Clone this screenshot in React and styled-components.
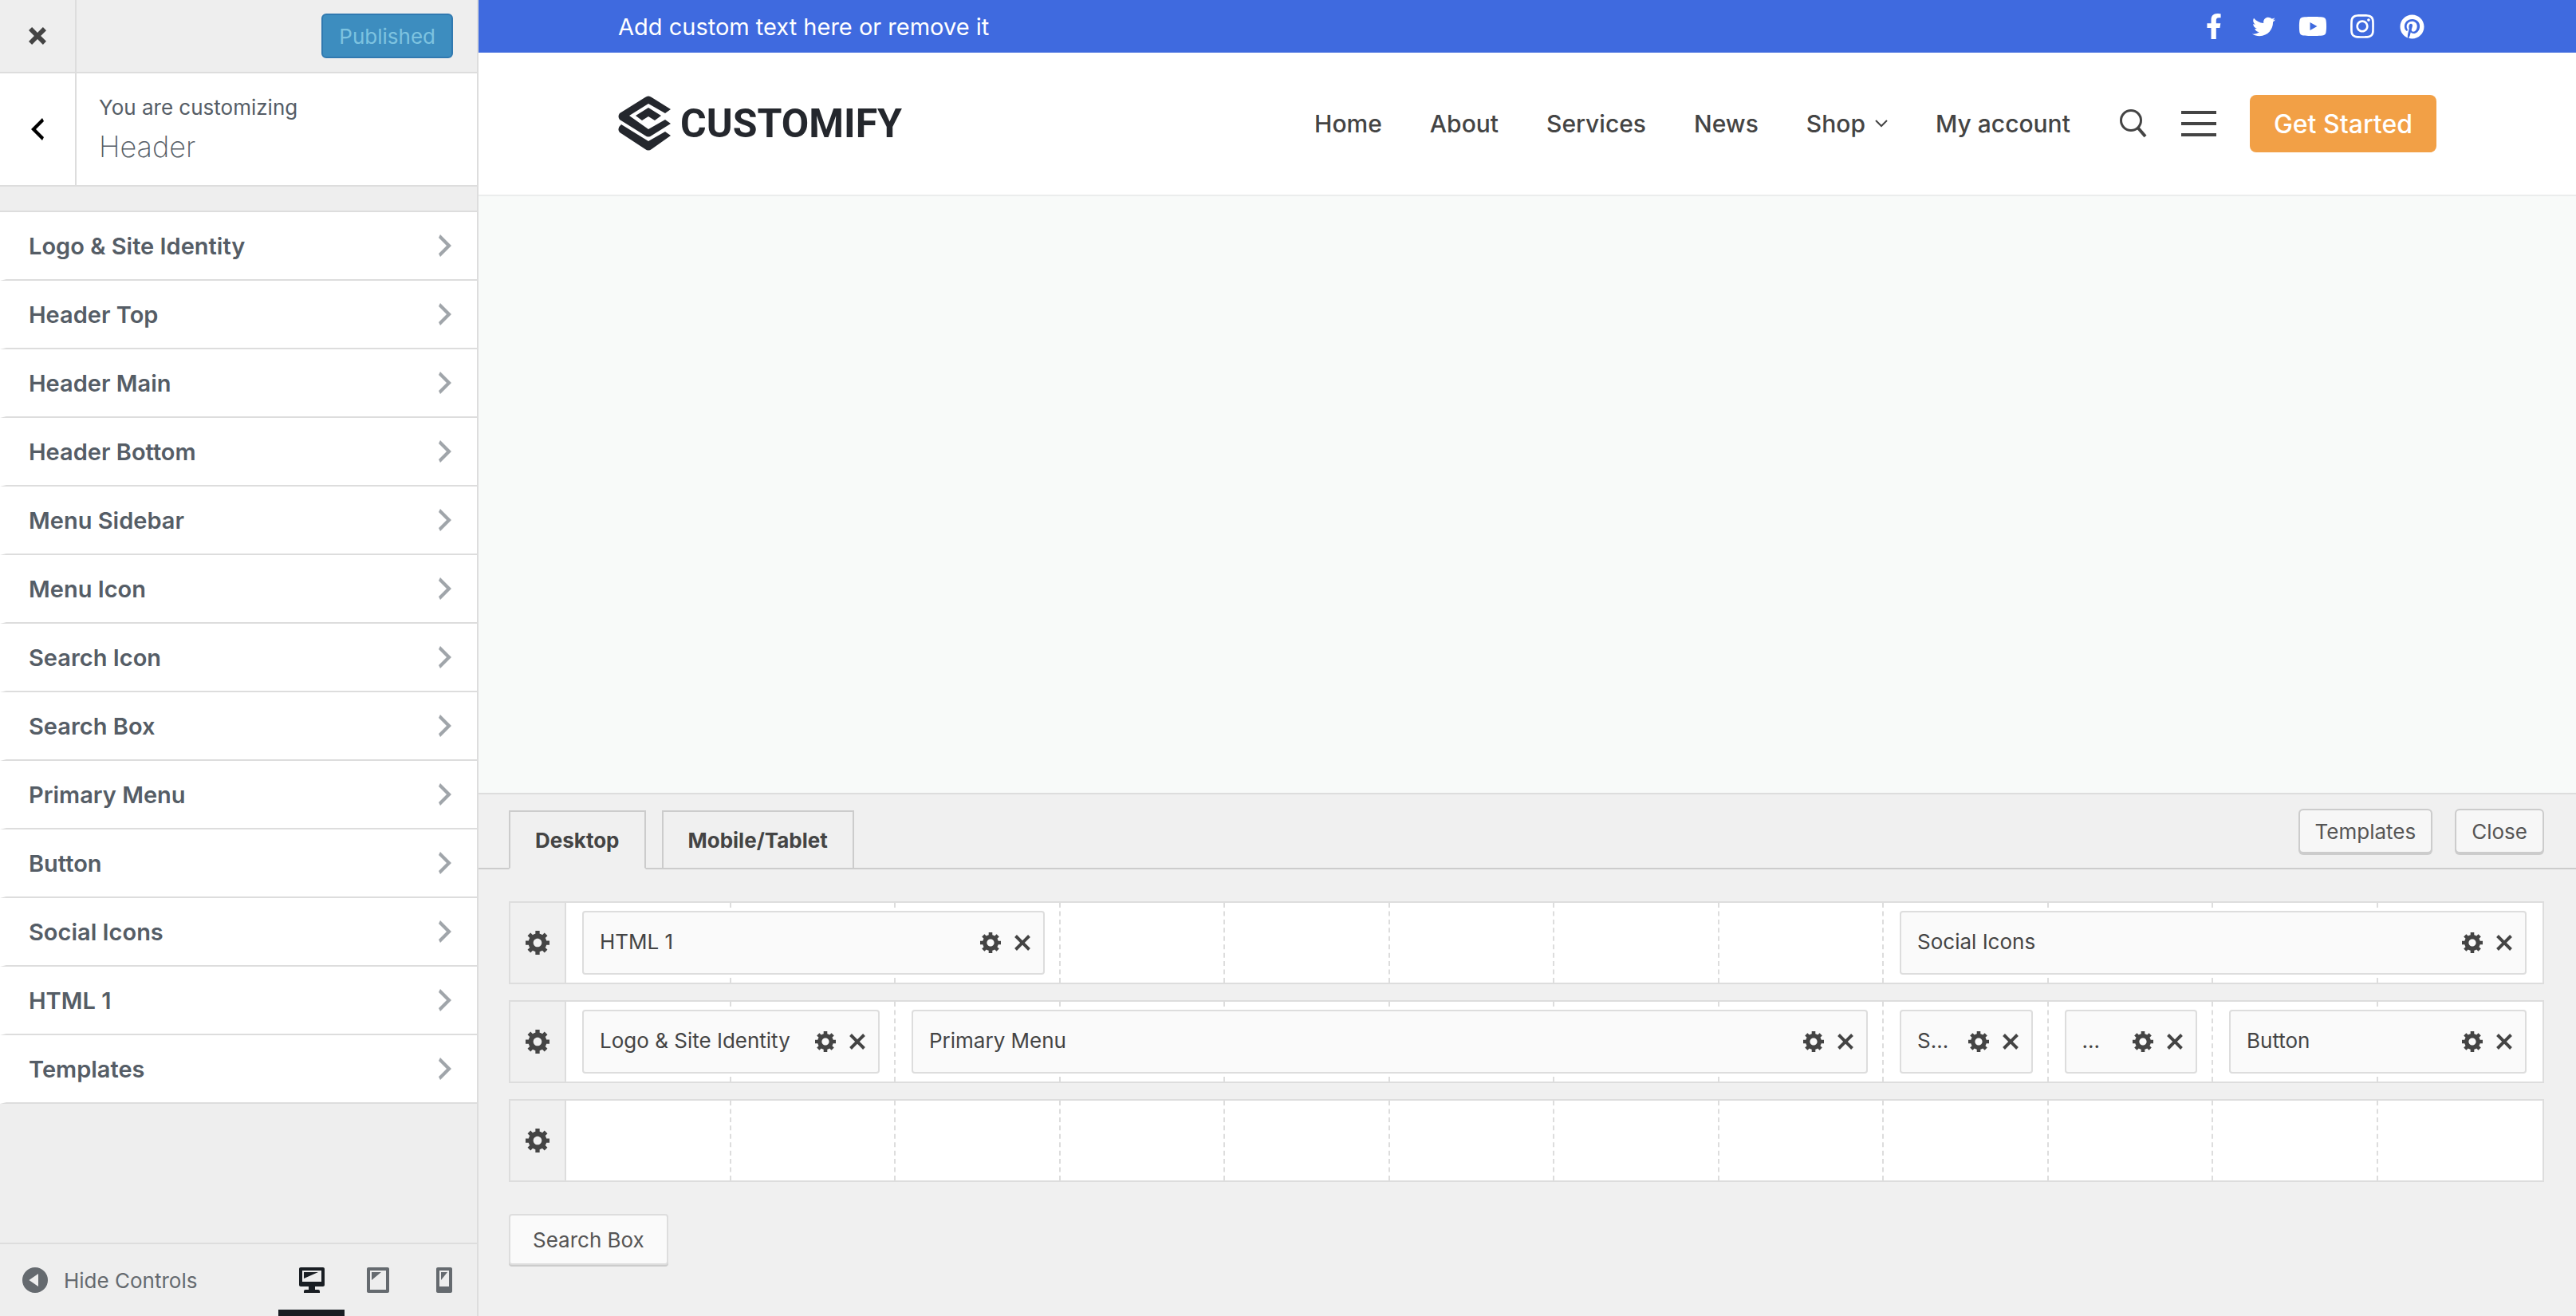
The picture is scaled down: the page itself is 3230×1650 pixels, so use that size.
import React from "react";
import styled, { createGlobalStyle, css } from "styled-components";
import { FaFacebookF, FaTwitter, FaYoutube, FaInstagram, FaPinterest } from "react-icons/fa";

const GlobalStyle = createGlobalStyle`
  *, *::before, *::after { box-sizing: border-box; }
  body { margin: 0; background: #eee; font-family: Inter, "Liberation Sans", sans-serif; }
  button { font-family: inherit; margin: 0; padding: 0; cursor: pointer; }
  h1, p, ul { margin: 0; padding: 0; }
  ul { list-style: none; }
  a { color: inherit; text-decoration: none; }
  svg { display: block; }
`;

const PATHS = {
  gear: ["1 2 17 17", "M18 12h-2.18c-.17.7-.44 1.35-.81 1.93l1.54 1.54-2.1 2.1-1.54-1.54c-.58.36-1.23.63-1.91.79V19H8v-2.18c-.68-.16-1.33-.43-1.91-.79l-1.54 1.54-2.12-2.12 1.54-1.54c-.36-.58-.63-1.23-.79-1.91H1V9.03h2.17c.16-.7.44-1.35.8-1.94L2.43 5.55l2.1-2.1 1.54 1.54c.58-.37 1.24-.64 1.93-.81V2h3v2.18c.68.16 1.33.43 1.91.79l1.54-1.54 2.12 2.12-1.54 1.54c.36.59.64 1.24.8 1.94H18V12zm-8.5 1.5c1.66 0 3-1.34 3-3s-1.34-3-3-3-3 1.34-3 3 1.34 3 3 3z"],
  remove: ["5 5 10 10", "M14.95 6.46L11.41 10l3.54 3.54-1.41 1.41L10 11.42l-3.53 3.53-1.42-1.42L8.58 10 5.05 6.47l1.42-1.42L10 8.58l3.54-3.53z"],
  close: ["4.34 4.34 11.32 11.32", "M12.12 10l3.53 3.53-2.12 2.12L10 12.12l-3.54 3.54-2.12-2.12L7.88 10 4.34 6.46l2.12-2.12L10 7.88l3.54-3.53 2.12 2.12z"],
  back: ["6 3 8 14", "M14 5l-5 5 5 5-1 2-7-7 7-7z"],
  next: ["6 3 8 14", "M6 15l5-5-5-5 1-2 7 7-7 7z"],
  collapse: ["2 2 16 16", "M10 2a8 8 0 1 0 0 16 8 8 0 0 0 0-16zM12 6v8l-5.8-4z"],
  desktop: ["2 2 16 16", "M3 2h14c.55 0 1 .45 1 1v10c0 .55-.45 1-1 1h-5v2h2c.55 0 1 .45 1 1v1H5v-1c0-.55.45-1 1-1h2v-2H3c-.55 0-1-.45-1-1V3c0-.55.45-1 1-1zm13 9V4H4v7h12zM5 5h9L5 9V5z"],
  tablet: ["2 2 16 16", "M4 2h12c.55 0 1 .45 1 1v14c0 .55-.45 1-1 1H4c-.55 0-1-.45-1-1V3c0-.55.45-1 1-1zm11 14V4H5v12h10zM6 5h6l-6 5V5z"],
  phone: ["2 2 16 16", "M6 2h8c.55 0 1 .45 1 1v14c0 .55-.45 1-1 1H6c-.55 0-1-.45-1-1V3c0-.55.45-1 1-1zm7 12V4H7v10h6zM8 5h4l-4 5V5z"],
};

function Icon({ name, width, height = width }) {
  const [box, d] = PATHS[name];
  return (
    <svg viewBox={box} width={width} height={height} fill="currentColor" fillRule="evenodd" aria-hidden="true">
      <path d={d} />
    </svg>
  );
}

const Page = styled.div`
  display: flex;
  min-height: 100vh;
`;

const Sidebar = styled.aside`
  display: flex;
  flex-direction: column;
  flex: 0 0 600px;
  background: #eee;
  border-right: 2px solid #ddd;
`;

const PublishBar = styled.div`
  display: flex;
  align-items: center;
  justify-content: space-between;
  height: 92px;
  padding-right: 30px;
  border-bottom: 2px solid #ddd;
`;

const SideButton = styled.button`
  display: flex;
  align-items: center;
  justify-content: center;
  align-self: stretch;
  width: 96px;
  border: 0;
  border-right: 2px solid #ddd;
  background: ${(p) => p.$bg};
  color: ${(p) => p.$color};
`;

const Published = styled.button`
  height: 56px;
  padding: 0 20px;
  border: 2px solid #3079b0;
  border-radius: 6px;
  background: #3d8dbf;
  color: #7dc3e0;
  font-size: 26px;
`;

const SectionHead = styled.header`
  display: flex;
  height: 142px;
  border-bottom: 2px solid #ddd;
  background: #fff;
`;

const SectionTitle = styled.div`
  padding: 24px 28px;
  color: #555d66;
`;

const Kicker = styled.p`
  font-size: 26px;
  line-height: 38px;
`;

const Title = styled.h1`
  font-size: 36px;
  font-weight: 200;
  line-height: 60px;
`;

const SectionList = styled.ul`
  margin-top: 30px;
  border-top: 2px solid #ddd;
`;

const SectionButton = styled.button`
  display: flex;
  align-items: center;
  justify-content: space-between;
  width: 100%;
  height: 86px;
  padding: 0 32px 0 28px;
  border: solid #ddd;
  border-width: 0 0 2px 8px;
  border-left-color: #fff;
  background: #fff;
  color: #555d66;
  font-size: 29px;
  font-weight: 600;

  svg { color: #a0a5aa; }
`;

const SideFooter = styled.footer`
  display: flex;
  justify-content: space-between;
  height: 92px;
  margin-top: auto;
  border-top: 2px solid #ddd;
  padding-left: 28px;
`;

const HideControls = styled.button`
  display: flex;
  align-items: center;
  gap: 20px;
  border: 0;
  background: none;
  color: #656a6f;
  font-size: 26px;
`;

const Devices = styled.div`
  display: flex;
`;

const DeviceButton = styled.button`
  display: flex;
  align-items: center;
  justify-content: center;
  width: 83px;
  border: 0;
  border-top: 8px solid transparent;
  border-bottom: 8px solid ${(p) => (p.$active ? "#191e23" : "transparent")};
  background: none;
  color: ${(p) => (p.$active ? "#191e23" : "#656a6f")};
`;

const Main = styled.main`
  display: flex;
  flex-direction: column;
  flex: 1;
  min-width: 0;
  background: #f8faf9;
`;

const Wrap = styled.div`
  display: flex;
  align-items: center;
  justify-content: space-between;
  width: 100%;
  max-width: 2400px;
  height: 100%;
  margin: 0 auto;
  padding: 0 60px;
`;

const TopBar = styled.div`
  height: 66px;
  background: #3f6adf;
  color: #fff;
  font-size: 29px;
`;

const Social = styled.div`
  display: flex;

  a {
    display: flex;
    align-items: center;
    justify-content: center;
    width: 62px;
  }
`;

const SiteHeader = styled.header`
  height: 180px;
  border-bottom: 2px solid #ebeded;
  background: #fff;
  color: #444;
`;

const Brand = styled.a`
  && { color: #24272d; }
  display: flex;
  align-items: center;
  gap: 10px;
  font-family: Roboto, "Liberation Sans", sans-serif;
  font-size: 50px;
  font-weight: 700;
`;

const HeaderRight = styled.div`
  display: flex;
  align-items: center;
`;

const Nav = styled.nav`
  display: flex;
  gap: 60px;
  font-size: 30px;
  font-weight: 500;

  a {
    display: flex;
    align-items: center;
    gap: 12px;
  }
`;

const PlainButton = styled.button`
  border: 0;
  background: none;
  color: inherit;
  margin-left: ${(p) => p.$gap}px;
`;

const Burger = styled.span`
  display: block;
  width: 44px;
  height: 32px;
  border: solid currentColor;
  border-width: 4px 0;
  padding: 10px 0;

  &::before {
    content: "";
    display: block;
    height: 4px;
    background: currentColor;
  }
`;

const CallToAction = styled.a`
  display: flex;
  align-items: center;
  height: 72px;
  margin-left: 42px;
  padding: 0 30px;
  border-radius: 8px;
  background: #f2a046;
  font-size: 32px;
  font-weight: 500;
  && { color: #fff; }
`;

const Builder = styled.section`
  margin-top: auto;
  padding-bottom: 64px;
  border-top: 2px solid #ddd;
  background: #f0f0f0;
`;

const TabStrip = styled.div`
  display: flex;
  align-items: flex-end;
  justify-content: space-between;
  height: 94px;
  padding: 0 40px 0 38px;
  border-bottom: 2px solid #ccc;
`;

const Tabs = styled.div`
  display: flex;
  gap: 20px;
  margin-bottom: -2px;
`;

const Tab = styled.button`
  height: 74px;
  padding: 0 31px;
  border: 2px solid #ccc;
  background: #f0f0f0;
  color: #444;
  font-size: 26px;
  font-weight: 700;
  ${(p) => p.$active && css`border-bottom-color: #f0f0f0;`}
`;

const Actions = styled.div`
  display: flex;
  align-self: flex-start;
  gap: 28px;
  padding-top: 18px;
`;

const buttonFace = css`
  border: 2px solid ${(p) => p.$line};
  box-shadow: 0 2px 0 #ccc;
  color: #555;
  font-size: 26px;
`;

const ActionButton = styled.button`
  ${buttonFace}
  height: 56px;
  padding: 0 19px;
  border-radius: 6px;
  background: #f7f7f7;
`;

const Rows = styled.div`
  display: flex;
  flex-direction: column;
  gap: 20px;
  padding: 40px 40px 40px 38px;
`;

const Row = styled.div`
  display: flex;
  height: 104px;
  border: 2px solid #ddd;
  background: #fff;
`;

const RowSettings = styled.button`
  display: flex;
  align-items: center;
  justify-content: center;
  width: 70px;
  border: 0;
  border-right: 2px solid #ddd;
  background: #f0f0f0;
  color: #444;
`;

const Grid = styled.div`
  display: grid;
  flex: 1;
  grid-template-columns: repeat(12, minmax(0, 1fr));
  grid-template-rows: 100px;
`;

const Cell = styled.div`
  grid-row: 1;
  grid-column: ${(p) => p.$at};
  border-right: 2px dashed #ddd;

  &:nth-child(12) { border-right: 0; }
`;

const Block = styled.div`
  display: flex;
  align-items: center;
  grid-row: 1;
  grid-column: ${(p) => p.$from} / span ${(p) => p.$span};
  margin: 10px 20px;
  padding: 0 16px 0 20px;
  border: 2px solid #ddd;
  border-radius: 4px;
  background: #fafafa;
  color: #444;
  font-size: 26px;
`;

const BlockName = styled.span`
  flex: 1;
  white-space: nowrap;
  padding-bottom: 4px;
`;

const BlockTool = styled.button`
  border: 0;
  background: none;
  color: inherit;
  margin-left: 17px;
`;

const Spare = styled.div`
  padding: 0 38px;
`;

const SpareBlock = styled.button`
  ${buttonFace}
  display: block;
  height: 64px;
  padding: 0 28px;
  border-radius: 4px;
  background: #fafafa;
`;

const sections = ["Logo & Site Identity", "Header Top", "Header Main", "Header Bottom", "Menu Sidebar", "Menu Icon", "Search Icon", "Search Box", "Primary Menu", "Button", "Social Icons", "HTML 1", "Templates"];

const socials = [
  ["Facebook", FaFacebookF, 32],
  ["Twitter", FaTwitter, 29],
  ["YouTube", FaYoutube, 36],
  ["Instagram", FaInstagram, 34],
  ["Pinterest", FaPinterest, 31],
];

const rows = [
  { name: "Header Top", blocks: [["HTML 1", 1, 3], ["Social Icons", 9, 4]] },
  { name: "Header Main", blocks: [["Logo & Site Identity", 1, 2], ["Primary Menu", 3, 6], ["S...", 9, 1, "Search Icon"], ["...", 10, 1, "Menu Icon"], ["Button", 11, 2]] },
  { name: "Header Bottom", blocks: [] },
];

const columns = Array.from({ length: 12 }, (_, i) => i + 1);

function Logo() {
  return (
    <svg width="68" height="70" viewBox="0 0 68 70" fill="currentColor" aria-hidden="true">
      <path d="M2 22 34 2Q38 -1 42 2L66 17 59 22 38 10 14 25 38 42 59 30 66 35 42 50Q38 53 34 50L2 30Q-1 26 2 22Z" />
      <path d="M38 15 54 25 46 31 38 26 30 31 22 25Z" />
      <path d="M4 36 38 57 59 45 66 50 42 67Q38 70 34 67L2 46Q-2 41 4 36Z" />
    </svg>
  );
}

export default function App() {
  return (
    <Page>
      <GlobalStyle />
      <Sidebar>
        <PublishBar>
          <SideButton $bg="#eee" $color="#444" aria-label="Close customizer"><Icon name="close" width={22} /></SideButton>
          <Published>Published</Published>
        </PublishBar>
        <SectionHead>
          <SideButton $bg="#fff" $color="#000" aria-label="Back"><Icon name="back" width={16} height={28} /></SideButton>
          <SectionTitle>
            <Kicker>You are customizing</Kicker>
            <Title>Header</Title>
          </SectionTitle>
        </SectionHead>
        <SectionList>
          {sections.map((s) => (
            <li key={s}>
              <SectionButton>{s}<Icon name="next" width={16} height={28} /></SectionButton>
            </li>
          ))}
        </SectionList>
        <SideFooter>
          <HideControls><Icon name="collapse" width={32} />Hide Controls</HideControls>
          <Devices>
            <DeviceButton $active aria-label="Desktop preview"><Icon name="desktop" width={32} /></DeviceButton>
            <DeviceButton aria-label="Tablet preview"><Icon name="tablet" width={32} /></DeviceButton>
            <DeviceButton aria-label="Mobile preview"><Icon name="phone" width={32} /></DeviceButton>
          </Devices>
        </SideFooter>
      </Sidebar>
      <Main>
        <TopBar>
          <Wrap>
            <p>Add custom text here or remove it</p>
            <Social>
              {socials.map(([label, Glyph, size]) => (
                <a key={label} href="#" aria-label={label}><Glyph size={size} /></a>
              ))}
            </Social>
          </Wrap>
        </TopBar>
        <SiteHeader>
          <Wrap>
            <Brand href="#"><Logo />CUSTOMIFY</Brand>
            <HeaderRight>
              <Nav>
                <a href="#">Home</a>
                <a href="#">About</a>
                <a href="#">Services</a>
                <a href="#">News</a>
                <a href="#">
                  Shop
                  <svg width="16" height="10" viewBox="0 0 16 10" fill="none" stroke="currentColor" strokeWidth="2" aria-hidden="true"><path d="M1 1l7 7 7-7" /></svg>
                </a>
                <a href="#">My account</a>
              </Nav>
              <PlainButton $gap={62} aria-label="Search">
                <svg width="34" height="36" viewBox="0 0 34 36" fill="none" stroke="currentColor" strokeWidth="3" aria-hidden="true">
                  <circle cx="14" cy="14" r="12.5" />
                  <path d="M22.5 23l9.500 11" strokeWidth="4" />
                </svg>
              </PlainButton>
              <PlainButton $gap={43} aria-label="Menu"><Burger /></PlainButton>
              <CallToAction href="#">Get Started</CallToAction>
            </HeaderRight>
          </Wrap>
        </SiteHeader>
        <Builder>
          <TabStrip>
            <Tabs>
              <Tab $active>Desktop</Tab>
              <Tab>Mobile/Tablet</Tab>
            </Tabs>
            <Actions>
              <ActionButton $line="#ccc">Templates</ActionButton>
              <ActionButton $line="#ccc">Close</ActionButton>
            </Actions>
          </TabStrip>
          <Rows>
            {rows.map((row) => (
              <Row key={row.name}>
                <RowSettings aria-label={`${row.name} settings`}><Icon name="gear" width={30} /></RowSettings>
                <Grid>
                  {columns.map((n) => <Cell key={n} $at={n} />)}
                  {row.blocks.map(([label, from, span, full = label]) => (
                    <Block key={from} $from={from} $span={span}>
                      <BlockName title={full}>{label}</BlockName>
                      <BlockTool aria-label={`${full} settings`}><Icon name="gear" width={26} /></BlockTool>
                      <BlockTool aria-label={`Remove ${full}`}><Icon name="remove" width={20} /></BlockTool>
                    </Block>
                  ))}
                </Grid>
              </Row>
            ))}
          </Rows>
          <Spare>
            <SpareBlock $line="#ddd">Search Box</SpareBlock>
          </Spare>
        </Builder>
      </Main>
    </Page>
  );
}
